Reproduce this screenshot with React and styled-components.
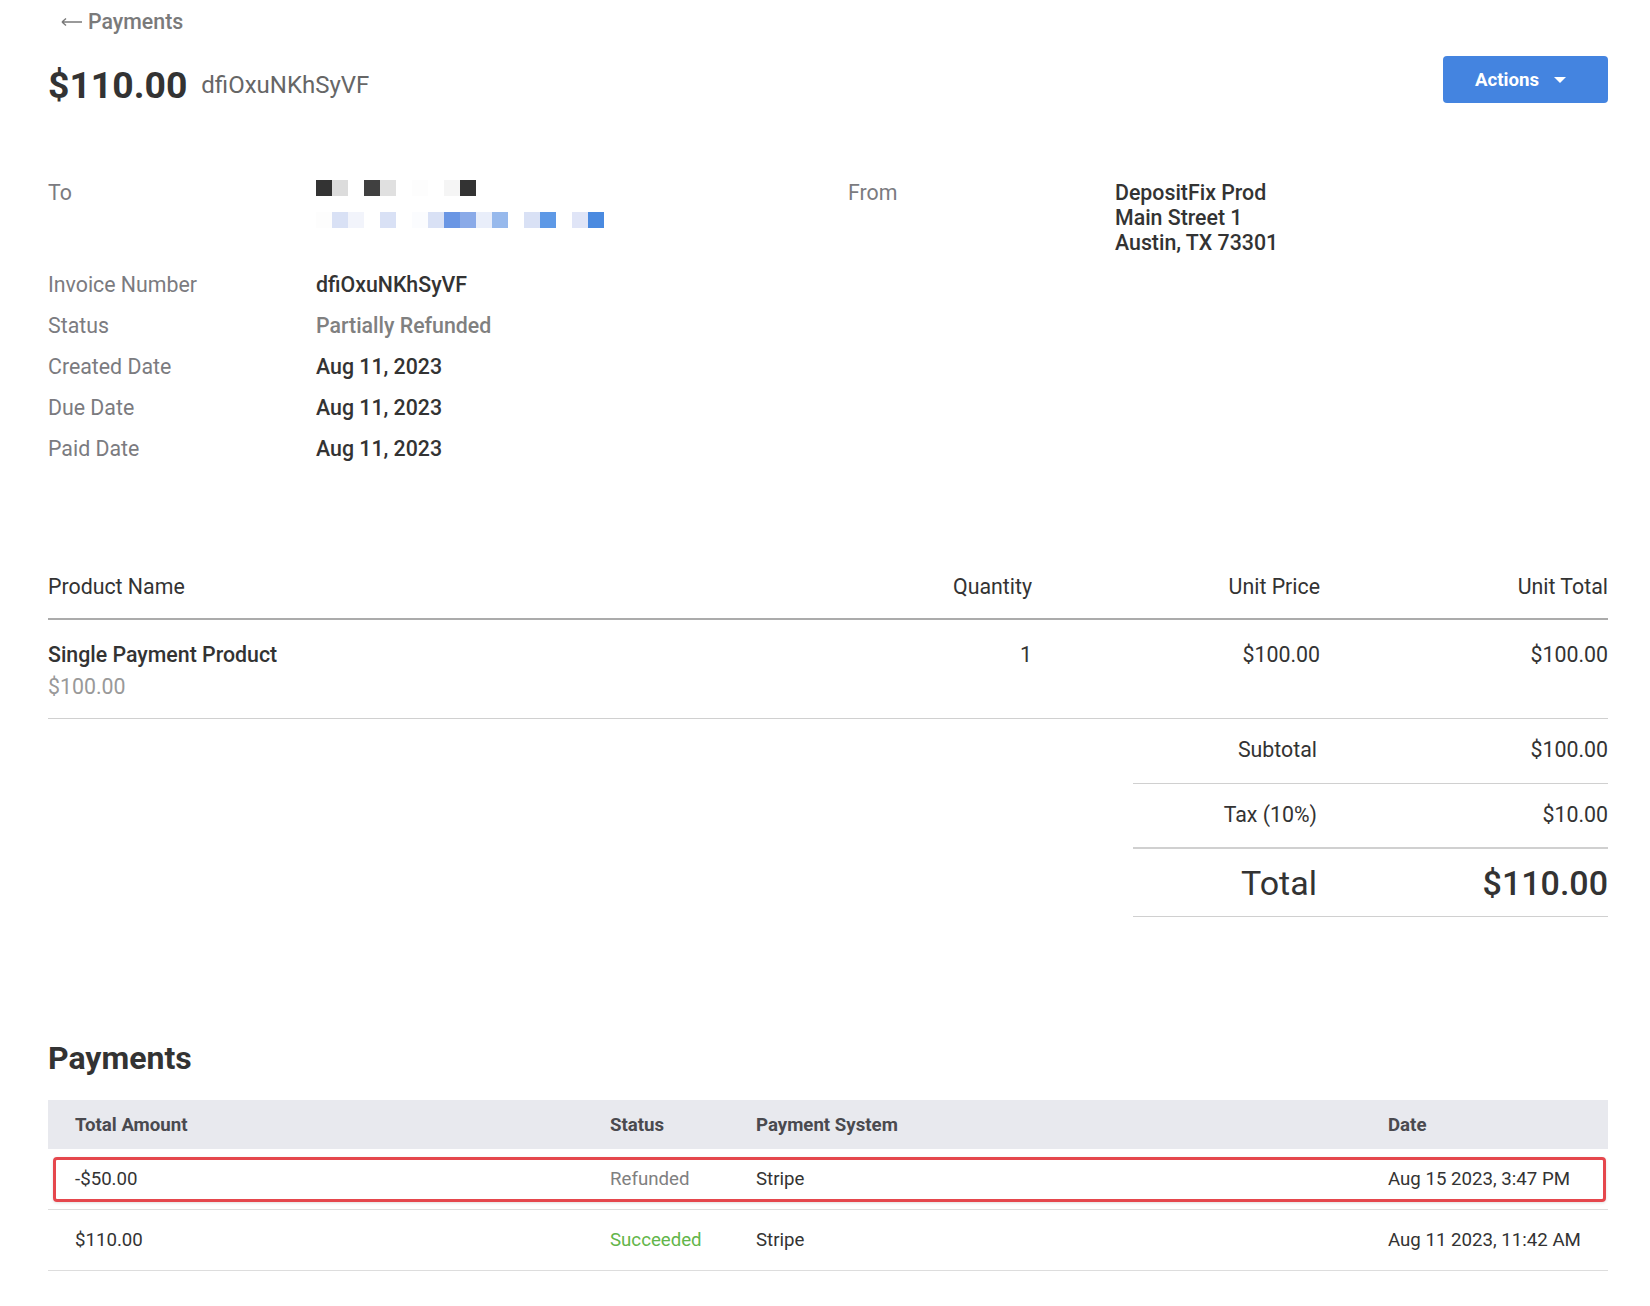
import React from "react";
import styled, { createGlobalStyle } from "styled-components";

const GlobalStyle = createGlobalStyle`
  body {
    margin: 0;
    background: #fff;
    font-family: Roboto, "Liberation Sans", sans-serif;
    color: #333;
  }
`;

const Page = styled.div`
  padding: 10px 42px 40px 48px;
`;

const BackLink = styled.a`
  display: flex;
  align-items: center;
  gap: 6px;
  margin-left: 13px;
  font-size: 21.33px;
  line-height: 24px;
  font-weight: 500;
  color: #7a7a7a;
  text-decoration: none;
`;

const Header = styled.div`
  display: flex;
  justify-content: space-between;
  align-items: flex-start;
  margin-top: 22px;
`;

const TitleGroup = styled.div`
  display: flex;
  align-items: center;
  gap: 14px;
  margin-top: 6px;
`;

const Amount = styled.h1`
  margin: 0;
  font-size: 37.33px;
  line-height: 46px;
  font-weight: 700;
  color: #333;
`;

const InvoiceId = styled.span`
  font-size: 24px;
  color: #666;
`;

const ActionsButton = styled.button`
  display: flex;
  align-items: center;
  gap: 15px;
  height: 47px;
  width: 165px;
  padding: 0 0 0 32px;
  border: none;
  border-radius: 4px;
  background: #4484e0;
  color: #fff;
  font-family: inherit;
  font-size: 18.67px;
  font-weight: 700;
  cursor: pointer;
`;

const Caret = styled.span`
  width: 0;
  height: 0;
  border-left: 6.5px solid transparent;
  border-right: 6.5px solid transparent;
  border-top: 6px solid #fff;
`;

const InfoSection = styled.div`
  display: grid;
  grid-template-columns: 800px 1fr;
  margin-top: 72px;
`;

const DetailRow = styled.div`
  display: grid;
  grid-template-columns: ${(p) => p.$labelWidth || 268}px 1fr;
  font-size: 21.33px;
  line-height: ${(p) => (p.$tall ? 25 : 41)}px;
`;

const Label = styled.div`
  color: #7b7b80;
`;

const Value = styled.div`
  font-weight: 500;
  color: ${(p) => (p.$muted ? "#808080" : "#333")};
`;

const Redacted = styled.svg`
  display: block;
  margin-bottom: 36px;
`;

const ProductTable = styled.div`
  margin-top: 105px;
`;

const ProductGrid = styled.div`
  display: grid;
  grid-template-columns: 1fr 288px 288px 288px;
  font-size: 21.33px;
  border-bottom: ${(p) => (p.$head ? "2px solid #ababab" : "1px solid #d0d0d0")};
  padding: ${(p) => (p.$head ? "0 0 19px" : "19px 0 15px")};
  line-height: ${(p) => (p.$head ? 25 : 32)}px;
`;

const Cell = styled.div`
  text-align: ${(p) => (p.$right ? "right" : "left")};
`;

const ProductName = styled.div`
  font-weight: 500;
  color: #333;
`;

const ProductPrice = styled.div`
  color: #999;
`;

const Totals = styled.div`
  margin-left: auto;
  width: 475px;
`;

const TotalRow = styled.div`
  display: grid;
  grid-template-columns: 1fr 291px;
  align-items: center;
  height: ${(p) => p.$height}px;
  padding-bottom: ${(p) => (p.$big ? 0 : 3)}px;
  box-sizing: border-box;
  border-bottom: ${(p) => (p.$thick ? 2 : 1)}px solid #d0d0d0;
  font-size: ${(p) => (p.$big ? 34 : 21.33)}px;
  text-align: right;
`;

const TotalLabel = styled.div`
  padding-right: 0;
`;

const TotalValue = styled.div`
  font-weight: ${(p) => (p.$big ? 500 : 400)};
`;

const SectionTitle = styled.h2`
  margin: 121px 0 22px;
  font-size: 32px;
  line-height: 40px;
  font-weight: 700;
  color: #333;
`;

const PayGrid = styled.div`
  position: relative;
  display: grid;
  grid-template-columns: 535px 146px 632px 1fr;
  align-items: center;
  height: ${(p) => (p.$head ? 49 : 60)}px;
  background: ${(p) => (p.$head ? "#e8e9ee" : "transparent")};
  border-bottom: ${(p) => (p.$head ? "none" : "1px solid #dddddd")};
  font-size: 18.67px;
  font-weight: ${(p) => (p.$head ? 700 : 400)};
  color: ${(p) => (p.$head ? "#4a4a4f" : "#333")};
`;

const PayCell = styled.div`
  padding-left: 27px;
  color: ${(p) => p.$color || "inherit"};
`;

const Highlight = styled.div`
  position: absolute;
  left: 5px;
  right: 2px;
  top: 8px;
  bottom: 7px;
  border: 3px solid #e5474d;
  border-radius: 4px;
  box-shadow: 0 1px 3px rgba(0, 0, 0, 0.12);
  pointer-events: none;
`;

const row1 = [
  [0, "#333"], [16, "#dcdcdc"], [48, "#404040"], [64, "#e0e0e0"],
  [96, "#fdfdfd"], [128, "#f5f5f5"], [144, "#333"],
];
const row2 = [
  [0, "#fdfdfd"], [16, "#d9e1f5"], [32, "#f2f4fb"], [64, "#d9e1f5"],
  [96, "#fbfcfe"], [112, "#d9e1f5"], [128, "#6a96e4"], [144, "#8aaae8"],
  [160, "#e9eefa"], [176, "#97b9ec"], [208, "#d9e1f5"], [224, "#5e99e6"],
  [256, "#e0e5f7"], [272, "#4a8ae0"],
];

const details = [
  { label: "Invoice Number", value: "dfiOxuNKhSyVF" },
  { label: "Status", value: "Partially Refunded", muted: true },
  { label: "Created Date", value: "Aug 11, 2023" },
  { label: "Due Date", value: "Aug 11, 2023" },
  { label: "Paid Date", value: "Aug 11, 2023" },
];

const payments = [
  { amount: "-$50.00", status: "Refunded", color: "#808080", system: "Stripe", date: "Aug 15 2023, 3:47 PM", marked: true },
  { amount: "$110.00", status: "Succeeded", color: "#62b54a", system: "Stripe", date: "Aug 11 2023, 11:42 AM" },
];

const App = () => {
  return (
    <Page>
      <GlobalStyle />
      <BackLink href="#">
        <svg width="21" height="10" viewBox="0 0 21 10">
          <path d="M1 5H21M1 5L5 1.5M1 5L5 8.5" stroke="#7a7a7a" strokeWidth="1.4" fill="none" />
        </svg>
        Payments
      </BackLink>

      <Header>
        <TitleGroup>
          <Amount>$110.00</Amount>
          <InvoiceId>dfiOxuNKhSyVF</InvoiceId>
        </TitleGroup>
        <ActionsButton>
          Actions
          <Caret />
        </ActionsButton>
      </Header>

      <InfoSection>
        <div>
          <DetailRow $tall>
            <Label>To</Label>
            <Redacted width="288" height="48" viewBox="0 0 288 48">
              {row1.map(([x, c]) => (
                <rect key={"a" + x} x={x} y="0" width="16" height="16" fill={c} />
              ))}
              {row2.map(([x, c]) => (
                <rect key={"b" + x} x={x} y="32" width="16" height="16" fill={c} />
              ))}
            </Redacted>
          </DetailRow>
          {details.map((d) => (
            <DetailRow key={d.label}>
              <Label>{d.label}</Label>
              <Value $muted={d.muted}>{d.value}</Value>
            </DetailRow>
          ))}
        </div>
        <div>
          <DetailRow $tall $labelWidth={267}>
            <Label>From</Label>
            <Value>
              DepositFix Prod
              <br />
              Main Street 1
              <br />
              Austin, TX 73301
            </Value>
          </DetailRow>
        </div>
      </InfoSection>

      <ProductTable>
        <ProductGrid $head>
          <Cell>Product Name</Cell>
          <Cell $right>Quantity</Cell>
          <Cell $right>Unit Price</Cell>
          <Cell $right>Unit Total</Cell>
        </ProductGrid>
        <ProductGrid>
          <Cell>
            <ProductName>Single Payment Product</ProductName>
            <ProductPrice>$100.00</ProductPrice>
          </Cell>
          <Cell $right>1</Cell>
          <Cell $right>$100.00</Cell>
          <Cell $right>$100.00</Cell>
        </ProductGrid>
      </ProductTable>

      <Totals>
        <TotalRow $height={65}>
          <TotalLabel>Subtotal</TotalLabel>
          <TotalValue>$100.00</TotalValue>
        </TotalRow>
        <TotalRow $height={65} $thick>
          <TotalLabel>Tax (10%)</TotalLabel>
          <TotalValue>$10.00</TotalValue>
        </TotalRow>
        <TotalRow $height={68} $big>
          <TotalLabel>Total</TotalLabel>
          <TotalValue $big>$110.00</TotalValue>
        </TotalRow>
      </Totals>

      <SectionTitle>Payments</SectionTitle>
      <div>
        <PayGrid $head>
          <PayCell>Total Amount</PayCell>
          <PayCell>Status</PayCell>
          <PayCell>Payment System</PayCell>
          <PayCell>Date</PayCell>
        </PayGrid>
        {payments.map((p) => (
          <PayGrid key={p.date}>
            <PayCell>{p.amount}</PayCell>
            <PayCell $color={p.color}>{p.status}</PayCell>
            <PayCell>{p.system}</PayCell>
            <PayCell>{p.date}</PayCell>
            {p.marked && <Highlight />}
          </PayGrid>
        ))}
      </div>
    </Page>
  );
};

export default App;
